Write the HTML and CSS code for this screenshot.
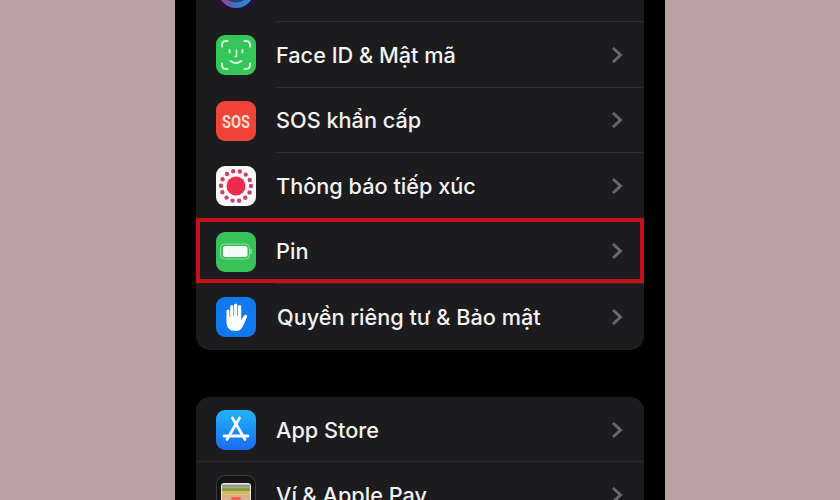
FILE: index.html
```html
<!DOCTYPE html>
<html>
<head>
    <title>Cài đặt</title>
    <link rel="stylesheet" href="styles.css">
</head>
<body>
    <div class="phone">
        <div class="card card-first">
            <div class="row">
                <svg class="icon" viewBox="0 0 40 40"><defs><linearGradient id="siri" x1="0" y1="0" x2="1" y2="0"><stop offset="0" stop-color="#c0306f"/><stop offset=".45" stop-color="#3f6fc0"/><stop offset="1" stop-color="#2f8fd8"/></linearGradient></defs><rect width="40" height="40" rx="9" fill="#221533"/><circle cx="20" cy="20" r="18" fill="url(#siri)"/><circle cx="20" cy="17.500" r="15" fill="#1d4274"/></svg>
                <div class="row-body"></div>
            </div>
            <div class="row">
                <svg class="icon" viewBox="0 0 40 40"><rect width="40" height="40" rx="9" fill="#35c659"/><g fill="none" stroke="#d9f5e0" stroke-width="2" stroke-linecap="round"><path d="M6 11.500V10Q6 6 10 6h1.500M28.500 6H30Q34 6 34 10v1.500M34 28.500V30Q34 34 30 34h-1.500M11.500 34H10Q6 34 6 30v-1.500"/><path d="M13.500 15v2.500M26.500 15v2.500"/><path d="M20.500 15v6.500h-1.500" stroke-width="1.600"/><path d="M14.500 26q5.500 4 11 0"/></g></svg>
                <div class="row-body"><span class="label">Face ID &amp; Mật mã</span><svg class="chevron" viewBox="0 0 12 18"><path d="M2 2l7.500 7-7.500 7"/></svg></div>
            </div>
            <div class="row">
                <svg class="icon" viewBox="0 0 40 40"><rect width="40" height="40" rx="9" fill="#f04438"/><text x="20" y="26.500" text-anchor="middle" textLength="28" lengthAdjust="spacingAndGlyphs" class="sos">SOS</text></svg>
                <div class="row-body"><span class="label">SOS khẩn cấp</span><svg class="chevron" viewBox="0 0 12 18"><path d="M2 2l7.500 7-7.500 7"/></svg></div>
            </div>
            <div class="row">
                <svg class="icon" viewBox="0 0 40 40"><rect width="40" height="40" rx="9" fill="#fbf8f8"/><circle cx="20" cy="20" r="9.500" fill="#f0294f"/><circle cx="20" cy="20" r="15" fill="none" stroke="#c9416a" stroke-width="4.400" stroke-linecap="round" stroke-dasharray="0 6.732"/></svg>
                <div class="row-body"><span class="label">Thông báo tiếp xúc</span><svg class="chevron" viewBox="0 0 12 18"><path d="M2 2l7.500 7-7.500 7"/></svg></div>
            </div>
            <div class="row row-marked">
                <svg class="icon" viewBox="0 0 40 40"><rect width="40" height="40" rx="9" fill="#37c25a"/><rect x="4.500" y="12" width="29" height="15" rx="4" fill="none" stroke="#8fdca3" stroke-width="1"/><rect x="7" y="14" width="24.500" height="11" rx="2.500" fill="#f2fbf4"/><path d="M35 17.500v4" stroke="#8fdca3" stroke-width="1.500" stroke-linecap="round"/></svg>
                <div class="row-body"><span class="label">Pin</span><svg class="chevron" viewBox="0 0 12 18"><path d="M2 2l7.500 7-7.500 7"/></svg></div>
            </div>
            <div class="row">
                <svg class="icon" viewBox="0 0 40 40"><rect width="40" height="40" rx="9" fill="#1079f0"/><path d="M10.500 14a1.500 1.500 0 0 1 3 0v6h.7V9.500a1.600 1.600 0 0 1 3.200 0V19h.7V8a1.600 1.600 0 0 1 3.200 0v11h.7V9.500a1.600 1.600 0 0 1 3.200 0V23l2.700-4.300c1.200-1.800 4-.7 3.100 1.400L27 29c-1.500 3-3.500 5-7.500 5-5.500 0-9-3.500-9-8.500z" fill="#fff"/></svg>
                <div class="row-body row-body-last"><span class="label label-shift">Quyền riêng tư &amp; Bảo mật</span><svg class="chevron" viewBox="0 0 12 18"><path d="M2 2l7.500 7-7.500 7"/></svg></div>
            </div>
        </div>

        <div class="card">
            <div class="row row-split">
                <svg class="icon" viewBox="0 0 40 40"><defs><linearGradient id="store" x1="0" y1="0" x2="0" y2="1"><stop offset="0" stop-color="#20b4fb"/><stop offset="1" stop-color="#1a6cef"/></linearGradient></defs><rect width="40" height="40" rx="9" fill="url(#store)"/><g stroke="#f4faff" stroke-width="2.800" stroke-linecap="round" fill="none"><path d="M23.500 8L11 29.500"/><path d="M16.500 8L29 29.500"/><path d="M8 26h24"/></g></svg>
                <div class="row-body row-body-last"><span class="label">App Store</span><svg class="chevron" viewBox="0 0 12 18"><path d="M2 2l7.500 7-7.500 7"/></svg></div>
            </div>
            <div class="row">
                <svg class="icon" viewBox="0 0 40 40"><rect x=".5" y=".5" width="39" height="39" rx="9" fill="#141414" stroke="#3a3a3c"/><rect x="5" y="8" width="30" height="27" rx="3" fill="#ece8dc"/><rect x="6" y="9.500" width="28" height="3" fill="#8fa090"/><rect x="6" y="12.500" width="28" height="4" fill="#8d9a45"/><rect x="6" y="16.500" width="28" height="3" fill="#d4bd58"/><rect x="6" y="19.500" width="28" height="15" fill="#d9b08e"/><path d="M15 22h10l-2 6h-6z" fill="#e8604a"/></svg>
                <div class="row-body row-body-last"><span class="label">Ví &amp; Apple Pay</span><svg class="chevron" viewBox="0 0 12 18"><path d="M2 2l7.500 7-7.500 7"/></svg></div>
            </div>
        </div>
    </div>
</body>
</html>
```

FILE: styles.css
```css
html, body {
    margin: 0;
    height: 500px;
    overflow: hidden;
}
body {
    background-color: #bba0a1;
    font-family: Inter, "Noto Sans", sans-serif;
}
.phone {
    width: 448px;
    height: 500px;
    margin: 0 auto;
    padding: 0 21px;
    background-color: #000;
    overflow: hidden;
}
.card {
    background-color: #1c1c1e;
    border-radius: 14px;
    margin-bottom: 47px;
}
.card-first {
    margin-top: -43.500px;
}
.row {
    display: flex;
    align-items: center;
    box-sizing: border-box;
    height: 65.500px;
    padding-top: 1px;
    padding-left: 20px;
    position: relative;
}
.row-split {
    box-shadow: inset 0 -1px 0 #2a2a2c;
}
.row-marked::after {
    content: "";
    position: absolute;
    top: -1px;
    left: 0;
    right: 0;
    bottom: 1px;
    border: 4px solid #c8101a;
}
.icon {
    width: 40px;
    height: 40px;
    flex-shrink: 0;
    margin-right: 20px;
}
.row-body {
    flex: 1;
    height: 100%;
    display: flex;
    align-items: center;
    justify-content: space-between;
    box-sizing: border-box;
    border-bottom: 1px solid #2f2f31;
    padding-right: 21px;
}
.row-body-last {
    border-bottom: none;
}
.label {
    color: #f2f2f3;
    font-size: 21.700px;
    font-weight: 450;
}
.label-shift {
    margin-left: 1px;
}
.chevron {
    width: 12px;
    height: 18px;
    fill: none;
    stroke: #68686c;
    stroke-width: 3;
}
.sos {
    font-family: Roboto, sans-serif;
    font-size: 19px;
    font-weight: 700;
    fill: #fbdcd4;
}
```
